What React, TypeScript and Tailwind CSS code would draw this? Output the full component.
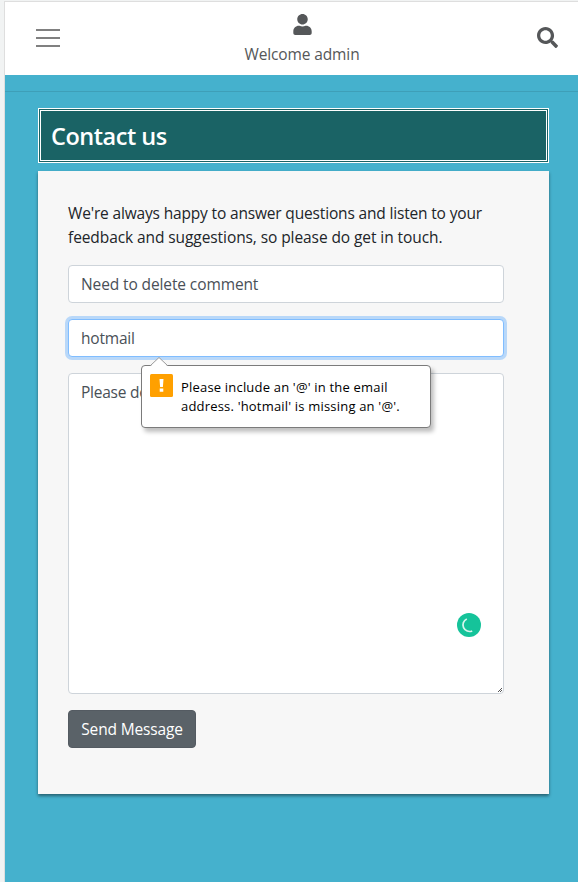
import { FaSearch, FaUser } from "react-icons/fa";

function Header() {
  return (
    <header className="flex h-[73px] items-start justify-between bg-white pr-[20px] pl-[31px] text-[#555759]">
      <button aria-label="Menu" className="mt-[27px] flex w-6 flex-col gap-[6px]">
        <span className="h-[2px] w-full bg-[#808080]" />
        <span className="h-[2px] w-full bg-[#808080]" />
        <span className="h-[2px] w-full bg-[#808080]" />
      </button>
      <div className="mt-[12px] ml-[7px] flex w-[120px] flex-col items-center">
        <FaUser size={21} />
        <span className="mt-[7px] text-[15.5px] leading-6 tracking-[-0.12px] whitespace-nowrap">Welcome admin</span>
      </div>
      <FaSearch size={21} className="mt-[25px]" />
    </header>
  );
}

function ValidationBubble() {
  return (
    <div className="absolute top-[46px] left-[73px] z-10 flex h-[63px] w-[290px] rounded-[4px] border border-[#7b7b7b] bg-white pt-[8px] pl-[8px] shadow-[3px_4px_4px_rgba(0,0,0,0.25)]">
      <svg className="absolute -top-[9px] left-[8px]" width="18" height="9" viewBox="0 0 18 9">
        <path d="M0.5 8.5 9 0.5 17.5 8.5" fill="#fff" stroke="#9a9a9a" />
        <path d="M1.5 8.5h15" stroke="#fff" />
      </svg>
      <svg className="shrink-0" width="23" height="23" viewBox="0 0 23 23">
        <rect width="23" height="23" rx="1.5" fill="#ffa000" />
        <path d="M9.5 5h4l-.6 8h-2.8zM9.7 14.5h3.6v3.2H9.7z" fill="#fff" />
      </svg>
      <p className="mt-[4px] ml-[8px] text-[13px] leading-[19px] tracking-[0.19px] whitespace-nowrap text-black">
        <span className="block">Please include an '@' in the email</span>
        <span className="block">address. 'hotmail' is missing an '@'.</span>
      </p>
    </div>
  );
}

export default function App() {
  return (
    <div className="h-[882px] w-[578px] overflow-hidden bg-[#f1f3f3] pt-px pl-1 font-['Open_Sans','Noto_Sans',sans-serif]">
      <div className="h-full border-t border-l border-[#dedede] bg-[#45b1cd]">
        <Header />
        <hr className="mt-4 border-t border-[#3e9fb8]" />
        <main className="mt-4 mr-[29px] ml-[33px]">
          <h1 className="h-[55px] border-[3px] border-double border-white bg-[#1a6365] pl-[10px] text-[23.5px] leading-[50px] font-semibold tracking-[-0.48px] text-white">
            Contact us
          </h1>
          <section className="mt-2 h-[623px] bg-[#f7f7f7] pt-[30px] pr-[45px] pl-[30px] text-[15.5px] leading-6 text-[#212529] shadow-[0_2px_3px_rgba(0,0,0,0.45)]">
            <p className="whitespace-nowrap">
              <span className="block tracking-[-0.165px]">We're always happy to answer questions and listen to your</span>
              <span className="block tracking-[-0.085px]">feedback and suggestions, so please do get in touch.</span>
            </p>
            <form className="text-[#495057]" noValidate>
              <input
                className="mt-4 block h-[38px] w-full rounded-[4px] border border-[#ced4da] bg-white px-3 tracking-[-0.11px]"
                defaultValue="Need to delete comment"
              />
              <div className="relative mt-4">
                <input
                  className="block h-[38px] w-full rounded-[4px] border border-[#80bdff] bg-white px-3 tracking-[-0.2px] shadow-[0_0_0_3px_#b9d8f9]"
                  defaultValue="hotmail"
                />
                <ValidationBubble />
              </div>
              <div className="relative mt-4">
                <textarea
                  className="block h-[321px] w-full resize-none rounded-[4px] border border-[#ced4da] bg-white px-3 py-[6px] tracking-[-0.25px]"
                  defaultValue="Please delete"
                />
                <svg className="absolute right-[2px] bottom-[2px]" width="4" height="4" viewBox="0 0 4 4" shapeRendering="crispEdges">
                  <path d="M3 0h1v1H3zM2 1h1v1H2zM1 2h1v1H1zM3 2h1v1H3zM0 3h1v1H0zM2 3h1v1H2z" fill="#555" />
                </svg>
                <svg className="absolute top-[240px] left-[389px]" width="24" height="24" viewBox="0 0 24 24">
                  <circle cx="12" cy="12" r="12" fill="#15c39a" />
                  <path d="M9.8 6A6.5 6.5 0 1 0 15.2 17.9" fill="none" stroke="#d8f5ed" strokeWidth="1.7" />
                </svg>
              </div>
              <button
                type="button"
                className="mt-4 h-[38px] w-32 rounded-[4px] border border-[#545b62] bg-[#5a6268] tracking-[-0.16px] whitespace-nowrap text-white"
              >
                Send Message
              </button>
            </form>
          </section>
        </main>
      </div>
    </div>
  );
}
